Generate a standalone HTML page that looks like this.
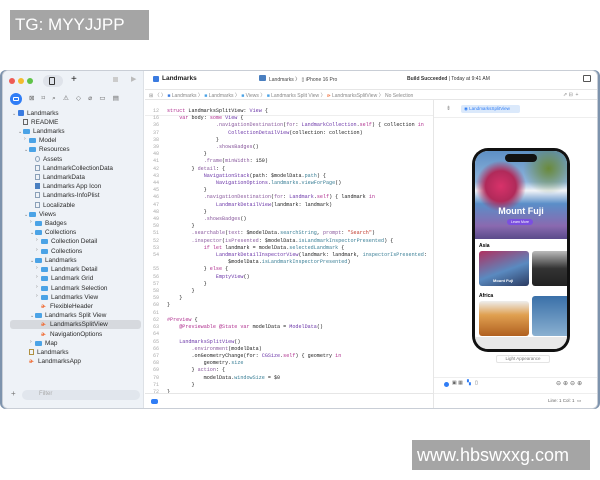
<!DOCTYPE html>
<html><head><meta charset="utf-8"><style>
*{margin:0;padding:0;box-sizing:border-box}
body{width:600px;height:480px;background:#fff;position:relative;overflow:hidden;font-family:"Liberation Sans",sans-serif}
.abs{position:absolute}
.win{left:2px;top:70px;width:596px;height:339px;background:#fff;border-radius:6px;border:1px solid #c9ced6;overflow:hidden;box-shadow:-2px 0 0 #7d93ad,2px 0 0 #7d93ad}
.side{left:0;top:0;width:141px;height:339px;background:#eef2f7;border-right:1px solid #dde1e6}
.row{position:absolute;font-size:6.4px;color:#2a2a2a;white-space:nowrap;height:9px;line-height:9px}
.fd{display:inline-block;width:7px;height:5px;background:#4ba3e6;border-radius:1px;margin-right:3px;vertical-align:-0.5px}
.sw{display:inline-block;width:6px;height:6px;color:#f06a32;font-size:6px;margin-right:3px;font-weight:bold;line-height:6px}
.doc{display:inline-block;width:5px;height:6px;border:0.8px solid #8aa0b8;margin-right:3px;vertical-align:-1px}
.ch{position:absolute;font-size:5px;color:#777}
.code{position:absolute;left:150px;top:0;font-family:"Liberation Mono",monospace;font-size:5.1px;line-height:7.2px;white-space:pre;color:#222}
.ln{color:#aaa;display:inline-block;width:14px}
.k{color:#b0308f}.t{color:#6b36a8}.p{color:#3a7f96}.s{color:#c0392b}.m{color:#8a5a9e}
</style></head><body>
<div class="abs" style="left:10px;top:10px;width:139px;height:30px;background:#a5a5a5;color:#fff;font-size:17px;line-height:30px;padding-left:5px">TG: MYYJJPP</div>
<div class="abs" style="left:412px;top:440px;width:178px;height:30px;background:#a5a5a5;color:#fff;font-size:18px;line-height:30px;padding-left:5px">www.hbswxxg.com</div>

<div class="abs win">
 <div class="abs side">
  <div class="abs" style="left:6px;top:7px;width:6px;height:6px;border-radius:50%;background:#ee5b55"></div>
  <div class="abs" style="left:15px;top:7px;width:6px;height:6px;border-radius:50%;background:#f3bc2f"></div>
  <div class="abs" style="left:24px;top:7px;width:6px;height:6px;border-radius:50%;background:#5fc348"></div>
  <div class="abs" style="left:40px;top:4px;width:20px;height:12px;border-radius:6px;background:#dfe3ea"></div>
  <div class="abs" style="left:46px;top:6px;width:6px;height:8px;border:1px solid #333;border-radius:1px"></div>
  <div class="abs" style="left:68px;top:3px;font-size:10px;color:#222">+</div>
  <div class="abs" style="left:110px;top:6px;width:5px;height:5px;background:#ccc"></div>
  <div class="abs" style="left:128px;top:4px;font-size:7px;color:#bbb">▶</div>
  <div class="abs" style="left:7px;top:22px;width:12px;height:12px;border-radius:50%;background:#2f7df6"></div>
  <div class="abs" style="left:10px;top:26px;width:6px;height:4px;border:1px solid #fff;border-radius:1px"></div>
  <div class="abs" style="left:26px;top:23px;font-size:6.5px;color:#666;letter-spacing:7.2px">⊠⌑⌕⚠◇⌀▭▤</div>
  <div class="ch" style="left:9px;top:40px">⌄</div><div class="row" style="left:15px;top:38px"><span class="fd" style="background:#3a7be0;width:6px;height:6px"></span>Landmarks</div>
  <div class="row" style="left:20px;top:47px"><span class="doc" style="border-color:#666"></span>README</div>
  <div class="ch" style="left:15px;top:58px">⌄</div><div class="row" style="left:20px;top:56px"><span class="fd"></span>Landmarks</div>
  <div class="ch" style="left:21px;top:65px">›</div><div class="row" style="left:26px;top:65px"><span class="fd"></span>Model</div>
  <div class="ch" style="left:21px;top:76px">⌄</div><div class="row" style="left:26px;top:74px"><span class="fd"></span>Resources</div>
  <div class="row" style="left:32px;top:84px"><span class="doc" style="border-radius:50%"></span>Assets</div>
  <div class="row" style="left:32px;top:93px"><span class="doc"></span>LandmarkCollectionData</div>
  <div class="row" style="left:32px;top:102px"><span class="doc"></span>LandmarkData</div>
  <div class="row" style="left:32px;top:111px"><span class="doc" style="background:#4a7fc0;border-color:#4a7fc0"></span>Landmarks App Icon</div>
  <div class="row" style="left:32px;top:120px"><span class="doc"></span>Landmarks-InfoPlist</div>
  <div class="row" style="left:32px;top:130px"><span class="doc"></span>Localizable</div>
  <div class="ch" style="left:21px;top:141px">⌄</div><div class="row" style="left:26px;top:139px"><span class="fd"></span>Views</div>
  <div class="ch" style="left:27px;top:148px">›</div><div class="row" style="left:32px;top:148px"><span class="fd"></span>Badges</div>
  <div class="ch" style="left:27px;top:159px">⌄</div><div class="row" style="left:32px;top:157px"><span class="fd"></span>Collections</div>
  <div class="ch" style="left:33px;top:166px">›</div><div class="row" style="left:38px;top:166px"><span class="fd"></span>Collection Detail</div>
  <div class="ch" style="left:33px;top:176px">›</div><div class="row" style="left:38px;top:176px"><span class="fd"></span>Collections</div>
  <div class="ch" style="left:27px;top:187px">⌄</div><div class="row" style="left:32px;top:185px"><span class="fd"></span>Landmarks</div>
  <div class="ch" style="left:33px;top:194px">›</div><div class="row" style="left:38px;top:194px"><span class="fd"></span>Landmark Detail</div>
  <div class="ch" style="left:33px;top:203px">›</div><div class="row" style="left:38px;top:203px"><span class="fd"></span>Landmark Grid</div>
  <div class="ch" style="left:33px;top:213px">›</div><div class="row" style="left:38px;top:213px"><span class="fd"></span>Landmark Selection</div>
  <div class="ch" style="left:33px;top:222px">›</div><div class="row" style="left:38px;top:222px"><span class="fd"></span>Landmarks View</div>
  <div class="row" style="left:38px;top:231px"><span class="sw">ɚ</span>FlexibleHeader</div>
  <div class="ch" style="left:27px;top:242px">⌄</div><div class="row" style="left:32px;top:240px"><span class="fd"></span>Landmarks Split View</div>
  <div class="abs" style="left:7px;top:249px;width:131px;height:9px;background:#d6d9de;border-radius:3px"></div>
  <div class="row" style="left:38px;top:249px"><span class="sw">ɚ</span>LandmarksSplitView</div>
  <div class="row" style="left:38px;top:259px"><span class="sw">ɚ</span>NavigationOptions</div>
  <div class="ch" style="left:27px;top:268px">›</div><div class="row" style="left:32px;top:268px"><span class="fd"></span>Map</div>
  <div class="row" style="left:26px;top:277px"><span class="doc" style="border-color:#b09040"></span>Landmarks</div>
  <div class="row" style="left:26px;top:286px"><span class="sw">ɚ</span>LandmarksApp</div>
  <div class="abs" style="left:8px;top:318px;font-size:8px;color:#777">+</div>
  <div class="abs" style="left:19px;top:319px;width:118px;height:10px;border-radius:5px;background:#e1e6ed"></div>
  <div class="row" style="left:36px;top:319px;color:#aaa;font-size:6px">Filter</div>
 </div>
 <!-- editor + toolbar -->
 <div class="abs" style="left:142px;top:0;width:454px;height:339px;background:#fff">
  <div class="abs" style="left:8px;top:5px;width:6px;height:6px;background:#3a7be0;border-radius:1px"></div>
  <div class="abs" style="left:17px;top:4px;font-size:6.5px;font-weight:bold;color:#222">Landmarks</div>
  <div class="abs" style="left:114px;top:4px;width:7px;height:6px;background:#4a7fc0;border-radius:1px"></div>
  <div class="abs" style="left:124px;top:5px;font-size:5px;color:#444;white-space:nowrap">Landmarks 〉 ▯ iPhone 16 Pro</div>
  <div class="abs" style="left:262px;top:5px;font-size:5px;color:#333;white-space:nowrap"><b>Build Succeeded</b> | Today at 9:41 AM</div>
  <div class="abs" style="left:438px;top:4px;width:8px;height:7px;border:1px solid #555;border-radius:1px"></div>
  <div class="abs" style="left:0;top:18px;width:454px;height:11px;border-top:1px solid #e6e6e6;border-bottom:1px solid #e6e6e6"></div>
  <div class="abs" style="left:4px;top:21px;font-size:5px;color:#888;white-space:nowrap">⊞ 〈 〉 <span style="color:#3a7be0">■</span> Landmarks 〉 <span style="color:#4ba3e6">■</span> Landmarks 〉 <span style="color:#4ba3e6">■</span> Views 〉 <span style="color:#4ba3e6">■</span> Landmarks Split View 〉 <span style="color:#f06a32">ɚ</span> LandmarksSplitView 〉 No Selection</div>
  <div class="abs" style="left:418px;top:21px;font-size:5px;color:#888">⇗ ⊟ &nbsp;+</div>
  <div class="abs" style="left:0;top:37px;width:288px;height:8px;border-bottom:1px solid #eee"></div>
  <div class="code" style="left:8px;top:37px"><span class="ln">12</span><span class="k">struct</span> LandmarksSplitView: <span class="t">View</span> {
<span class="ln">16</span>    <span class="k">var</span> body: <span class="k">some</span> <span class="t">View</span> {
<span class="ln">36</span>                <span class="m">.navigationDestination</span>(<span class="m">for</span>: <span class="t">LandmarkCollection</span>.<span class="k">self</span>) { collection <span class="k">in</span>
<span class="ln">37</span>                    <span class="t">CollectionDetailView</span>(collection: collection)
<span class="ln">38</span>                }
<span class="ln">39</span>                <span class="m">.showsBadges</span>()
<span class="ln">40</span>            }
<span class="ln">41</span>            <span class="m">.frame</span>(<span class="m">minWidth</span>: 150)
<span class="ln">42</span>        } <span class="m">detail</span>: {
<span class="ln">43</span>            <span class="t">NavigationStack</span>(path: $modelData.<span class="p">path</span>) {
<span class="ln">44</span>                <span class="t">NavigationOptions</span>.<span class="p">landmarks</span>.<span class="p">viewForPage</span>()
<span class="ln">45</span>            }
<span class="ln">46</span>            <span class="m">.navigationDestination</span>(<span class="m">for</span>: <span class="t">Landmark</span>.<span class="k">self</span>) { landmark <span class="k">in</span>
<span class="ln">47</span>                <span class="t">LandmarkDetailView</span>(landmark: landmark)
<span class="ln">48</span>            }
<span class="ln">49</span>            <span class="m">.showsBadges</span>()
<span class="ln">50</span>        }
<span class="ln">51</span>        <span class="m">.searchable</span>(<span class="m">text</span>: $modelData.<span class="p">searchString</span>, <span class="m">prompt</span>: <span class="s">"Search"</span>)
<span class="ln">52</span>        <span class="m">.inspector</span>(<span class="m">isPresented</span>: $modelData.<span class="p">isLandmarkInspectorPresented</span>) {
<span class="ln">53</span>            <span class="k">if let</span> landmark = modelData.<span class="p">selectedLandmark</span> {
<span class="ln">54</span>                <span class="t">LandmarkDetailInspectorView</span>(landmark: landmark, <span class="p">inspectorIsPresented</span>:
<span class="ln"></span>                    $modelData.<span class="p">isLandmarkInspectorPresented</span>)
<span class="ln">55</span>            } <span class="k">else</span> {
<span class="ln">56</span>                <span class="t">EmptyView</span>()
<span class="ln">57</span>            }
<span class="ln">58</span>        }
<span class="ln">59</span>    }
<span class="ln">60</span>}
<span class="ln">61</span>
<span class="ln">62</span><span class="k">#Preview</span> {
<span class="ln">63</span>    <span class="k">@Previewable @State var</span> modelData = <span class="t">ModelData</span>()
<span class="ln">64</span>
<span class="ln">65</span>    <span class="t">LandmarksSplitView</span>()
<span class="ln">66</span>        <span class="m">.environment</span>(modelData)
<span class="ln">67</span>        .onGeometryChange(for: <span class="t">CGSize</span>.<span class="k">self</span>) { geometry <span class="k">in</span>
<span class="ln">68</span>            geometry.<span class="p">size</span>
<span class="ln">69</span>        } <span class="m">action</span>: {
<span class="ln">70</span>            modelData.<span class="p">windowSize</span> = $0
<span class="ln">71</span>        }
<span class="ln">72</span>}</div>
  <div class="abs" style="left:0;top:322px;width:288px;height:17px;border-top:1px solid #e6e6e6"></div>
  <div class="abs" style="left:6px;top:328px;width:7px;height:5px;background:#2f7df6;border-radius:2px"></div>
 </div>
 <!-- preview -->
 <div class="abs" style="left:430px;top:29px;width:166px;height:310px;background:#fff;border-left:1px solid #e6e6e6">
  <div class="abs" style="left:12px;top:5px;font-size:6px;color:#999">⇟</div>
  <div class="abs" style="left:27px;top:5px;width:59px;height:8px;background:#dbe9fb;border-radius:2px;font-size:4.5px;color:#2f7df6;line-height:8px;padding-left:3px;white-space:nowrap">◉ LandmarksSplitView</div>
  <div class="abs" style="left:0;top:17px;width:166px;height:1px;background:#eee"></div>
  <div class="abs" style="left:38px;top:48px;width:98px;height:204px;background:#111;border-radius:16px"></div>
  <div class="abs" style="left:41px;top:51px;width:92px;height:198px;background:#fff;border-radius:13px;overflow:hidden">
   <div class="abs" style="left:0;top:0;width:92px;height:88px;background:radial-gradient(circle at 28% 40%,#d8326a 0,#b02a5a 18%,transparent 30%),radial-gradient(circle at 80% 20%,#6a8a3a 0,transparent 25%),linear-gradient(180deg,#5d8fc4 0%,#8eb4dc 35%,#f2f4f8 45%,#5a8ec8 60%,#8a6ab0 85%,#5a4a8a 100%)"></div>
   <div class="abs" style="left:30px;top:3px;width:32px;height:8px;background:#111;border-radius:4px"></div>
   <div class="abs" style="left:0;top:55px;width:92px;text-align:center;color:#fff;font-weight:bold;font-size:9px">Mount Fuji</div>
   <div class="abs" style="left:32px;top:68px;width:26px;height:6px;background:#7b4fe0;border-radius:3px;color:#fff;font-size:3.5px;text-align:center;line-height:6px">Learn More</div>
   <div class="abs" style="left:4px;top:92px;font-size:5px;font-weight:bold">Asia</div>
   <div class="abs" style="left:4px;top:100px;width:50px;height:35px;border-radius:3px;background:linear-gradient(160deg,#b03060,#5a8ac0 55%,#2a3a60)"></div>
   <div class="abs" style="left:18px;top:127px;font-size:4px;color:#fff;font-weight:bold">Mount Fuji</div>
   <div class="abs" style="left:57px;top:100px;width:40px;height:35px;border-radius:3px;background:linear-gradient(180deg,#bbb,#333 50%,#222)"></div>
   <div class="abs" style="left:4px;top:142px;font-size:5px;font-weight:bold">Africa</div>
   <div class="abs" style="left:4px;top:150px;width:50px;height:35px;border-radius:3px;background:linear-gradient(180deg,#eee 0%,#e0a050 40%,#b06020 100%)"></div>
   <div class="abs" style="left:57px;top:145px;width:40px;height:40px;border-radius:3px;background:linear-gradient(180deg,#3a70a8,#8ab0d0)"></div>
   <div class="abs" style="left:0;top:186px;width:92px;height:12px;background:#e8e8e8"></div>
  </div>
  <div class="abs" style="left:62px;top:255px;width:54px;height:8px;border:1px solid #e4e4e4;border-radius:2px;font-size:4.5px;color:#777;text-align:center;line-height:6px">Light Appearance</div>
  <div class="abs" style="left:0;top:277px;width:166px;height:1px;background:#eee"></div>
  <div class="abs" style="left:10px;top:282px;width:5px;height:5px;border-radius:50%;background:#2f7df6"></div>
  <div class="abs" style="left:18px;top:280px;font-size:5px;color:#666;white-space:nowrap">▣ ▦ &nbsp;&nbsp;<span style="color:#2f7df6">▚</span> &nbsp;&nbsp;▯</div>
  <div class="abs" style="left:122px;top:280px;font-size:6px;color:#666;letter-spacing:2px">⊖⊕⊖⊕</div>
  <div class="abs" style="left:0;top:293px;width:166px;height:1px;background:#eee"></div>
  <div class="abs" style="left:114px;top:298px;font-size:4.5px;color:#666;white-space:nowrap">Line: 1 Col: 1 &nbsp;▭</div>
 </div>
</div>
</body></html>
